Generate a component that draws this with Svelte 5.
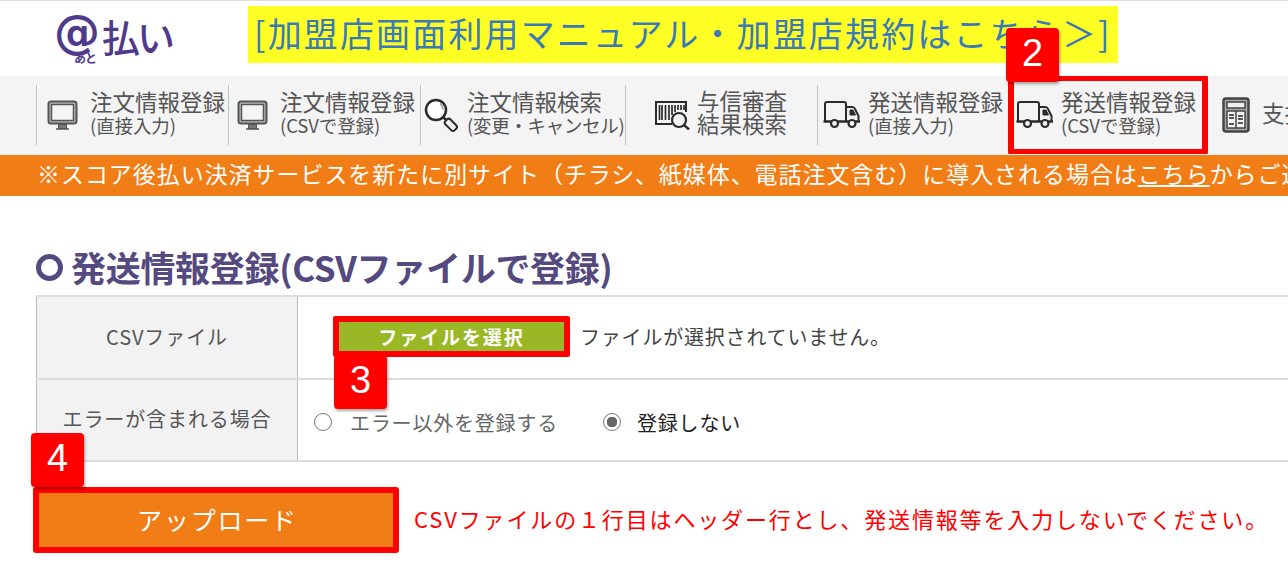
<script>
  const nav = [
    { icon: 'monitor', a: '注文情報登録', b: '(直接入力)', w: 192 },
    { icon: 'monitor', a: '注文情報登録', b: '(CSVで登録)', w: 192 },
    { icon: 'search', a: '注文情報検索', b: '(変更・キャンセル)', w: 205 },
    { icon: 'barcode', a: '与信審査', b: '結果検索', w: 192, two: true },
    { icon: 'truck', a: '発送情報登録', b: '(直接入力)', w: 191 },
    { icon: 'truck', a: '発送情報登録', b: '(CSVで登録)', w: 198, plain: true, mark: true },
    { icon: 'calc', a: '支払状況', b: '', w: 120, plain: true }
  ];
</script>

<div class="page">
  <header class="top">
    <div class="logo">
      <span class="at">@</span><span class="ato">あと</span><span class="pay">払い</span>
    </div>
    <a class="manual" href="#manual">[加盟店画面利用マニュアル・加盟店規約はこちら＞]</a>
  </header>

  <nav class="nav">
    {#each nav as item}
      <div class="item" class:plain={item.plain} class:mark={item.mark} style="width:{item.w}px">
        <span class="ico">
          {#if item.icon === 'monitor'}
            <svg width="32" height="30" viewBox="0 0 32 30" fill="none" stroke="#555"><rect x="1.500" y="1.500" width="28" height="22" rx="2.500" fill="#bbb" stroke-width="2"/><rect x="4.500" y="4.500" width="22" height="16" fill="#f4f4f4" stroke-width="1.500"/><path d="M11.500 28.500V24.500h8v4z" fill="#777" stroke-width="1"/><path d="M9 29h13" stroke-width="1.500"/></svg>
          {:else if item.icon === 'search'}
            <svg width="36" height="36" viewBox="0 0 36 36" fill="none" stroke="#2b2b2b"><circle cx="13" cy="13" r="10" fill="#fff" stroke-width="2.500"/><path d="M17 6.500a7.500 7.500 0 0 1 3 6" stroke="#999" stroke-width="1.500"/><path d="M20 20l3 3" stroke-width="2.500"/><rect x="-3.500" y="-6" width="7" height="13" rx="2.500" transform="translate(27.500 27.500) rotate(-45)" fill="#f4f4f4" stroke-width="2"/></svg>
          {:else if item.icon === 'barcode'}
            <svg width="38" height="30" viewBox="0 0 38 30" fill="none" stroke="#2b2b2b"><path d="M18 24H2V2h30v10" stroke-width="2"/><path d="M5.500 5v15M8 5v15M11.500 5v15M15 5v15M18 5v10M21 5v7M24 5v5M27 5v5M30 5v5" stroke-width="1.700"/><circle cx="25" cy="20" r="7" fill="#f4f4f4" stroke-width="2.200"/><path d="M30 25l5 4.500" stroke-width="2.400"/></svg>
          {:else if item.icon === 'truck'}
            <svg width="38" height="30" viewBox="0 0 38 30" fill="none" stroke="#2b2b2b" stroke-width="2"><path d="M2 21.500V4a2 2 0 0 1 2-2h17a2 2 0 0 1 2 2v17.500"/><path d="M23 7h6a3 3 0 0 1 3 2l3.500 7v5.500"/><path d="M27 10h3l2.500 5H27z" fill="#2b2b2b" stroke-width="1"/><path d="M0.500 21.500H37" stroke-width="2.500"/><circle cx="11.500" cy="23.500" r="3.500" fill="#f4f4f4" stroke-width="2.200"/><circle cx="29" cy="23.500" r="3.500" fill="#f4f4f4" stroke-width="2.200"/></svg>
          {:else}
            <svg width="28" height="36" viewBox="0 0 28 36" fill="none" stroke="#444" stroke-width="2"><rect x="1.500" y="1.500" width="25" height="33" rx="2.500" fill="#aaa" stroke-width="2.500"/><rect x="5" y="5" width="18" height="6" fill="#eee" stroke-width="1.500"/><rect x="5" y="14" width="18" height="17" fill="#f4f4f4" stroke-width="1.500"/><path d="M14 14v17" stroke-width="1.500"/><path d="M7 18h5M7 21h5M7 27h5M16 19h5M16 22h5M16 26h5" stroke-width="1.500" stroke="#222"/></svg>
          {/if}
        </span>
        <span class="words" class:two={item.two}>
          <span class="a">{item.a}</span>
          {#if item.b}<span class="b">{item.b}</span>{/if}
        </span>
      </div>
    {/each}
  </nav>

  <p class="notice">※スコア後払い決済サービスを新たに別サイト（チラシ、紙媒体、電話注文含む）に導入される場合は<u>こちら</u>からご連絡</p>

  <main class="main">
    <h1><span class="ring"></span>発送情報登録(CSVファイルで登録)</h1>

    <div class="table">
      <div class="row r1">
        <div class="th">CSVファイル</div>
        <div class="td first">
          <span class="filebtn">ファイルを選択</span>
          <span class="nofile">ファイルが選択されていません。</span>
        </div>
      </div>
      <div class="row">
        <div class="th">エラーが含まれる場合</div>
        <div class="td second">
          <span class="radio"></span><span class="opt">エラー以外を登録する</span>
          <span class="radio on"></span><span class="opt dark">登録しない</span>
        </div>
      </div>
    </div>

    <div class="actions">
      <button class="upload" type="button">アップロード</button>
      <span class="warn">CSVファイルの１行目はヘッダー行とし、発送情報等を入力しないでください。</span>
    </div>
  </main>

  <span class="badge b2">2</span>
  <span class="badge b3">3</span>
  <span class="badge b4">4</span>
</div>

<style>
  :global(body) { margin: 0; background: #fff; overflow: hidden; }
  .page {
    position: relative;
    width: 1288px;
    height: 571px;
    overflow: hidden;
    font-family: "Noto Sans CJK JP", "Noto Sans", sans-serif;
    color: #555;
    border-top: 1px solid #ddd;
    box-sizing: border-box;
  }
  .top {
    height: 75px;
    display: flex;
    align-items: flex-start;
    box-sizing: border-box;
    padding: 5px 0 0 54px;
  }
  .logo {
    width: 194px;
    height: 60px;
    display: flex;
    align-items: center;
    color: #4f3a8c;
    position: relative;
  }
  .at { font: 700 46px/60px "DejaVu Sans", sans-serif; margin-top: -8px; letter-spacing: -2px; }
  .ato { position: absolute; left: 20px; top: 45px; font-size: 12px; line-height: 14px; font-weight: 700; letter-spacing: -1px; }
  .pay { font-size: 38px; line-height: 60px; font-weight: 500; letter-spacing: -3px; margin-left: 4px; margin-top: 0; }
  .manual {
    width: 870px;
    height: 57px;
    background: #ffff26;
    color: #3a7ab5;
    font-size: 34px;
    letter-spacing: 2.150px;
    line-height: 54px;
    text-decoration: none;
    white-space: nowrap;
    box-sizing: border-box;
    padding-left: 6px;
    overflow: hidden;
  }
  .nav {
    height: 78px;
    background: #f4f4f4;
    display: flex;
    align-items: center;
    box-sizing: border-box;
    padding-left: 36px;
    overflow: hidden;
  }
  .item {
    height: 60px;
    flex: none;
    display: flex;
    align-items: center;
    box-sizing: border-box;
    border-left: 1px solid #c4c4c4;
    padding-left: 10px;
  }
  .item.plain { border-left-color: transparent; }
  .ico { width: 43px; flex: none; display: flex; align-items: center; }
  .words { display: flex; flex-direction: column; white-space: nowrap; color: #555; padding-bottom: 7px; }
  .a { font-size: 22.500px; line-height: 26px; }
  .b { font-size: 18.500px; line-height: 22px; letter-spacing: -0.100px; }
  .two .b { font-size: 22.500px; line-height: 23px; letter-spacing: 0; }
  .two .a { line-height: 23px; }
  .item:nth-child(2) { padding-left: 8px; }
  .item:nth-child(3) { padding-left: 2px; }
  .item:nth-child(3) .ico { width: 44px; }
  .item:nth-child(3) .b { letter-spacing: -0.300px; }
  .item:nth-child(4) { padding-left: 28px; }
  .item:nth-child(5) { padding-left: 5px; }
  .item:nth-child(5) .ico { width: 45px; }
  .item:nth-child(6) { padding-left: 7px; position: relative; }
  .item:nth-child(6) .ico { width: 45px; }
  .item:nth-child(7) { padding-left: 15px; }
  .item:nth-child(7) .a { margin-left: -3px; }
  .mark::after {
    content: "";
    position: absolute;
    left: -1px;
    top: -10px;
    width: 200px;
    height: 80px;
    border: 6px solid #f00;
    border-radius: 3px;
    box-sizing: border-box;
  }
  .notice {
    margin: 0;
    height: 41px;
    background: #f07d16;
    color: #fff;
    font-size: 23px;
    letter-spacing: 0.950px;
    line-height: 37px;
    padding-left: 37px;
    white-space: nowrap;
    overflow: hidden;
    border-top: 1px solid #f4f4f4;
  }
  .main { padding: 0 0 0 36px; }
  h1 {
    margin: 0;
    height: 99px;
    box-sizing: border-box;
    padding-top: 43px;
    display: flex;
    align-items: center;
    color: #554a80;
    font-size: 35px;
    font-weight: 700;
    letter-spacing: -0.300px;
    line-height: 46px;
    white-space: nowrap;
  }
  .ring {
    width: 27px;
    height: 27px;
    border: 5px solid #554a80;
    border-radius: 50%;
    box-sizing: border-box;
    margin-right: 8px;
  }
  .table { border-top: 2px solid #ddd; width: 1300px; }
  .row { display: flex; height: 80px; border-bottom: 2px solid #ddd; }
  .row.r1 { height: 81px; }
  .th {
    width: 262px;
    flex: none;
    background: #f2f2f2;
    border-left: 1px solid #bbb;
    border-right: 1px solid #bbb;
    display: flex;
    align-items: center;
    justify-content: center;
    box-sizing: border-box;
    padding-bottom: 3px;
    font-size: 20px;
    letter-spacing: 0.900px;
    color: #555;
    white-space: nowrap;
  }
  .td { display: flex; align-items: center; flex: 1; white-space: nowrap; }
  .first { padding: 0 0 3px 35px; }
  .filebtn {
    width: 225px;
    height: 29px;
    background: #9ab825;
    color: #fff;
    font-size: 19px;
    font-weight: 700;
    letter-spacing: 1.900px;
    display: flex;
    align-items: center;
    justify-content: center;
    border: 6px solid #f00;
    border-radius: 2px;
  }
  .nofile { margin-left: 10px; font-size: 20px; letter-spacing: 0.800px; color: #444; }
  .second { padding: 4px 0 0 16px; }
  .radio {
    width: 18px;
    height: 18px;
    border: 1.500px solid #777;
    border-radius: 50%;
    box-sizing: border-box;
    background: #fff;
  }
  .radio.on {
    margin-left: 45px;
    background: radial-gradient(circle, #666 0 5px, #fff 5.500px);
  }
  .opt { margin-left: 18px; font-size: 20px; letter-spacing: 0.800px; color: #666; }
  .opt.dark { color: #222; margin-left: 16px; }
  .actions { display: flex; align-items: center; height: 91px; margin-left: -3px; }
  .upload {
    width: 366px;
    height: 66px;
    margin-top: 25px;
    background: #f07d16;
    color: #fff;
    border: 6px solid #f00;
    border-radius: 3px;
    box-sizing: border-box;
    font: 400 25px "Noto Sans CJK JP", sans-serif;
    letter-spacing: 1.800px;
    padding: 0 0 3px 3px;
  }
  .warn { margin: 21px 0 0 15px; color: #f00; font-size: 22px; letter-spacing: 1.850px; white-space: nowrap; }
  .badge {
    position: absolute;
    width: 53px;
    height: 54px;
    background: #f00;
    border-radius: 4px;
    color: #fff;
    font: 400 38px/51px "Liberation Sans", sans-serif;
    text-align: center;
    box-shadow: 1px 2px 3px rgba(0, 0, 0, 0.35);
  }
  .b2 { left: 1006px; top: 27px; }
  .b3 { left: 334px; top: 354px; line-height: 50px; }
  .b4 { left: 31px; top: 432px; }
</style>
